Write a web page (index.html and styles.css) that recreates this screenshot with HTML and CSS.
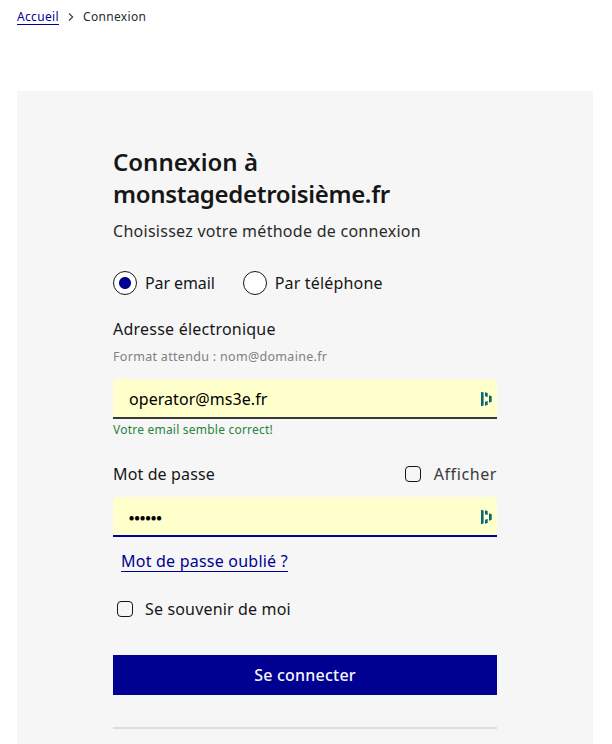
FILE: index.html
```html
<!DOCTYPE html>
<html lang="fr">
<head>
<meta charset="utf-8">
<title>Connexion</title>
<link rel="stylesheet" href="styles.css">
</head>
<body>
<nav class="breadcrumb">
  <a class="crumb-link" href="#">Accueil</a>
  <svg class="chevron" width="6" height="8" viewBox="0 0 6 8"><path d="M1 .5 4.700 4 1 7.500" fill="none" stroke="#3a3a3a" stroke-width="1.100"/></svg>
  <span class="crumb-current">Connexion</span>
</nav>
<main class="panel">
  <h1 class="title"><span class="title-first">Connexion à</span><br>monstagedetroisième.fr</h1>
  <p class="intro">Choisissez votre méthode de connexion</p>
  <div class="radios">
    <label class="choice"><span class="radio checked"></span><span class="email-choice">Par email</span></label>
    <label class="choice"><span class="radio"></span><span class="phone-choice">Par téléphone</span></label>
  </div>
  <label class="label address">Adresse électronique</label>
  <p class="hint">Format attendu : nom@domaine.fr</p>
  <div class="field">
    <input class="input" type="text" value="operator@ms3e.fr">
    <svg class="manager" width="12" height="16" viewBox="0 0 12 16"><path d="M1 .8l2.600.6v13.200L1 15.200zM5 1.200l2.700.8v4L5 5.200zM5 10.800l2.700-.8v4L5 14.800zM9 4.300l2.700.9v5.600L9 11.700z" fill="#0e6672"/></svg>
  </div>
  <p class="valid">Votre email semble correct!</p>
  <div class="password-head">
    <label class="label password">Mot de passe</label>
    <label class="show"><span class="box"></span><span class="show-text">Afficher</span></label>
  </div>
  <div class="field active">
    <input class="input secret" type="password" value="123456">
    <svg class="manager" width="12" height="16" viewBox="0 0 12 16"><path d="M1 .8l2.600.6v13.200L1 15.200zM5 1.200l2.700.8v4L5 5.200zM5 10.800l2.700-.8v4L5 14.800zM9 4.300l2.700.9v5.600L9 11.700z" fill="#0e6672"/></svg>
  </div>
  <a class="forgot" href="#">Mot de passe oublié ?</a>
  <label class="remember"><span class="box"></span><span class="remember-text">Se souvenir de moi</span></label>
  <button class="submit" type="button">Se connecter</button>
  <hr class="rule">
</main>
</body>
</html>
```
FILE: styles.css
```css
* { box-sizing: border-box; }
body {
  margin: 0;
  height: 744px;
  overflow: hidden;
  display: flex;
  flex-direction: column;
  background: #fff;
  color: #161616;
  font: 16px/24px "Noto Sans", sans-serif;
}
h1, p { margin: 0; }
.breadcrumb {
  display: flex;
  align-items: center;
  height: 20px;
  margin: 7px 17px 64px;
  font-size: 12px;
  line-height: 20px;
  letter-spacing: .34px;
}
.crumb-link { color: #000091; text-decoration: none; line-height: 15px; border-bottom: 1px solid #000091; }
.chevron { margin: 0 9px; }
.crumb-current { color: #2a2a2a; }
.panel {
  flex: 1;
  display: flex;
  flex-direction: column;
  width: 576px;
  margin-left: 17px;
  padding: 55px 96px 0;
  background: #f6f6f6;
}
.panel > * { flex: none; }
.title { font-size: 24px; line-height: 32px; font-weight: 600; white-space: nowrap; letter-spacing: -.32px; }
.title-first { letter-spacing: 0; }
.intro { margin-top: 9px; color: #2a2a2a; white-space: nowrap; letter-spacing: .27px; }
.radios { display: flex; gap: 28px; margin-top: 28px; height: 24px; }
.choice { display: flex; gap: 8px; }
.email-choice { letter-spacing: -.1px; }
.phone-choice { letter-spacing: .17px; }
.radio { width: 24px; height: 24px; border: 1px solid #161616; border-radius: 50%; background: #fff; }
.checked { background: radial-gradient(circle, #000091 5.500px, #fff 6.500px); }
.address { margin-top: 22px; letter-spacing: .22px; }
.hint { margin-top: 6px; font-size: 12.5px; line-height: 20px; color: #808080; letter-spacing: .31px; }
.field {
  display: flex;
  align-items: center;
  height: 40px;
  margin-top: 12px;
  padding: 1px 5px 0 16px;
  background: #ffffcb;
  border-bottom: 2px solid #3a3a3a;
  border-radius: 4px 4px 0 0;
}
.active { margin-top: 11px; border-color: #000091; }
.input { flex: 1; min-width: 0; padding: 0; border: 0; outline: 0; background: transparent; color: #000; font: inherit; letter-spacing: .06px; }
.secret { padding-top: 2px; font-size: 13px; font-weight: 900; letter-spacing: .4px; }
.valid { margin-top: 1px; font-size: 12px; line-height: 20px; color: #26843f; letter-spacing: .22px; }
.password-head { display: flex; justify-content: space-between; margin-top: 22px; letter-spacing: .13px; }
.show { display: flex; align-items: center; gap: 13px; color: #3a3a3a; }
.show-text { letter-spacing: .6px; }
.box { width: 16px; height: 16px; border: 1px solid #161616; border-radius: 4px; }
.forgot { align-self: flex-start; margin: 14px 0 0 8px; line-height: 20px; color: #000091; text-decoration: none; border-bottom: 1px solid #000091; letter-spacing: .22px; }
.remember { display: flex; align-items: center; gap: 12px; margin: 25px 0 0 4px; letter-spacing: .16px; }
.submit { height: 40px; margin-top: 34px; border: 0; background: #000091; color: #f5f5fe; font: 500 16px/24px "Noto Sans", sans-serif; letter-spacing: .22px; }
.rule { width: 100%; height: 2px; margin: 32px 0 0; border: 0; background: #ddd; }
```
